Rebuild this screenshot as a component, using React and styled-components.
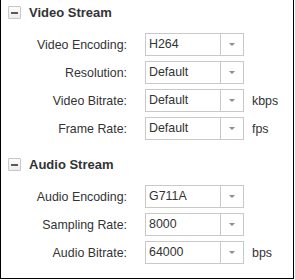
import React from 'react';
import styled, { createGlobalStyle } from 'styled-components';

const GlobalStyle = createGlobalStyle`
  html, body {
    margin: 0;
    padding: 0;
    background: #ffffff;
  }
  body {
    font-family: Arial, "Liberation Sans", sans-serif;
  }
`;

const sections = [
  {
    title: 'Video Stream',
    rows: [
      { label: 'Video Encoding:', value: 'H264' },
      { label: 'Resolution:', value: 'Default' },
      { label: 'Video Bitrate:', value: 'Default', unit: 'kbps' },
      { label: 'Frame Rate:', value: 'Default', unit: 'fps' },
    ],
  },
  {
    title: 'Audio Stream',
    rows: [
      { label: 'Audio Encoding:', value: 'G711A' },
      { label: 'Sampling Rate:', value: '8000' },
      { label: 'Audio Bitrate:', value: '64000', unit: 'bps' },
    ],
  },
];

const App = () => {
  return (
    <>
      <GlobalStyle />
      <Frame>
        {sections.map(section => (
          <Section key={section.title}>
            <SectionHeader>
              <Toggle>
                <Dash />
              </Toggle>
              <SectionTitle>{section.title}</SectionTitle>
            </SectionHeader>
            <Rows>
              {section.rows.map(row => (
                <Row key={row.label}>
                  <Label>{row.label}</Label>
                  <Select>
                    <SelectValue>{row.value}</SelectValue>
                    <SelectArrow>
                      <Caret />
                    </SelectArrow>
                  </Select>
                  {row.unit && <Unit>{row.unit}</Unit>}
                </Row>
              ))}
            </Rows>
          </Section>
        ))}
      </Frame>
    </>
  );
};

export default App;

const Frame = styled.div`
  box-sizing: border-box;
  width: 294px;
  height: 279px;
  border-left: 1px solid #000;
  border-right: 1px solid #000;
  border-bottom: 1px solid #000;
  padding: 6px 0 0 7px;
  display: flex;
  flex-direction: column;
  gap: 18px;
`;

const Section = styled.div`
  display: flex;
  flex-direction: column;
`;

const SectionHeader = styled.div`
  display: flex;
  align-items: center;
  height: 13px;
  gap: 8px;
`;

const Toggle = styled.div`
  box-sizing: border-box;
  width: 13px;
  height: 13px;
  border: 1px solid #c8c8c8;
  border-radius: 1px;
  background: linear-gradient(#fdfdfd, #ececec);
  display: flex;
  align-items: center;
  justify-content: center;
`;

const Dash = styled.span`
  width: 7px;
  height: 2px;
  background: #5a5a5a;
`;

const SectionTitle = styled.span`
  font-size: 13px;
  font-weight: bold;
  color: #333333;
`;

const Rows = styled.div`
  display: flex;
  flex-direction: column;
  gap: 5px;
  margin-top: 14px;
`;

const Row = styled.div`
  display: flex;
  align-items: center;
  height: 23px;
`;

const Label = styled.span`
  width: 119px;
  text-align: right;
  font-size: 12.4px;
  color: #333333;
  margin-right: 18px;
`;

const Select = styled.div`
  box-sizing: border-box;
  width: 99px;
  height: 23px;
  border: 1px solid #c9c9c9;
  display: flex;
  background: #ffffff;
`;

const SelectValue = styled.span`
  flex: 1;
  padding-left: 3px;
  font-size: 12.4px;
  line-height: 21px;
  color: #333333;
`;

const SelectArrow = styled.span`
  box-sizing: border-box;
  width: 23px;
  border-left: 1px solid #c9c9c9;
  display: flex;
  align-items: center;
  justify-content: center;
`;

const Caret = styled.span`
  width: 0;
  height: 0;
  border-left: 3px solid transparent;
  border-right: 3px solid transparent;
  border-top: 3px solid #8c8c8c;
`;

const Unit = styled.span`
  margin-left: 8px;
  font-size: 12.4px;
  color: #333333;
`;
